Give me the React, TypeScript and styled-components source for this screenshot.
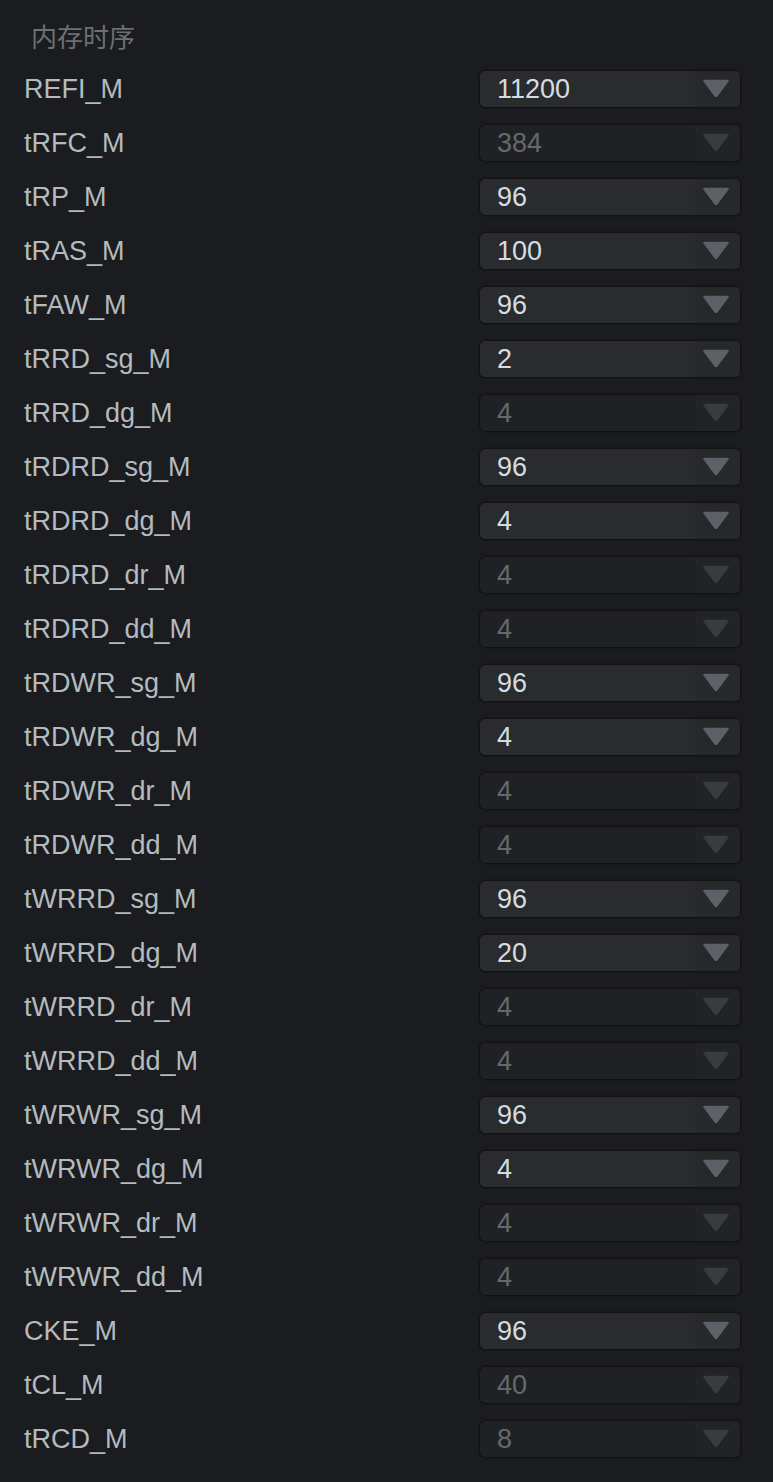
import React from "react";
import styled, { createGlobalStyle } from "styled-components";

const Global = createGlobalStyle`
  html, body { margin: 0; padding: 0; background: #1b1c1f; }
  body { font-family: "Liberation Sans", Arial, "Noto Sans CJK SC", sans-serif; }
`;

const Page = styled.div`
  width: 773px;
  height: 1482px;
  background: #1b1c1f;
  box-sizing: border-box;
  padding: 0 33px 0 24px;
  overflow: hidden;
`;

const Title = styled.div`
  height: 62px;
  display: flex;
  align-items: center;
  padding-left: 7px;
  padding-top: 8px;
  box-sizing: border-box;
  font-family: "Noto Sans CJK SC", sans-serif;
  font-size: 26px;
  color: #6c6f73;
`;

const List = styled.div`
  display: flex;
  flex-direction: column;
`;

const Row = styled.div`
  height: 54px;
  display: flex;
  align-items: center;
  justify-content: space-between;
`;

const Label = styled.div`
  font-size: 27px;
  color: #b3bbbf;
  padding-top: 1px;
`;

const Select = styled.div<{ $disabled?: boolean }>`
  width: 260px;
  height: 36px;
  border-radius: 5px;
  display: flex;
  overflow: hidden;
  background: ${(p) => (p.$disabled ? "#1f2124" : "#2a2b2d")};
  box-shadow: 0 0 2px 1px rgba(0, 0, 0, 0.45);
`;

const Value = styled.div<{ $disabled?: boolean }>`
  flex: 1;
  display: flex;
  align-items: center;
  padding-left: 17px;
  padding-top: 1px;
  font-size: 27px;
  color: ${(p) => (p.$disabled ? "#66696c" : "#d3dde1")};
`;

const Arrow = styled.div<{ $disabled?: boolean }>`
  width: 45px;
  display: flex;
  align-items: center;
  justify-content: center;
  box-sizing: border-box;
  padding-right: 3px;
  padding-bottom: 1px;
  background: ${(p) => (p.$disabled ? "#212326" : "#27282a")};
  svg { display: block; }
`;

type Item = [string, string, boolean];

const items: Item[] = [
  ["REFI_M", "11200", false],
  ["tRFC_M", "384", true],
  ["tRP_M", "96", false],
  ["tRAS_M", "100", false],
  ["tFAW_M", "96", false],
  ["tRRD_sg_M", "2", false],
  ["tRRD_dg_M", "4", true],
  ["tRDRD_sg_M", "96", false],
  ["tRDRD_dg_M", "4", false],
  ["tRDRD_dr_M", "4", true],
  ["tRDRD_dd_M", "4", true],
  ["tRDWR_sg_M", "96", false],
  ["tRDWR_dg_M", "4", false],
  ["tRDWR_dr_M", "4", true],
  ["tRDWR_dd_M", "4", true],
  ["tWRRD_sg_M", "96", false],
  ["tWRRD_dg_M", "20", false],
  ["tWRRD_dr_M", "4", true],
  ["tWRRD_dd_M", "4", true],
  ["tWRWR_sg_M", "96", false],
  ["tWRWR_dg_M", "4", false],
  ["tWRWR_dr_M", "4", true],
  ["tWRWR_dd_M", "4", true],
  ["CKE_M", "96", false],
  ["tCL_M", "40", true],
  ["tRCD_M", "8", true],
];

const Triangle = ({ disabled }: { disabled: boolean }) => (
  <svg width="28" height="19" viewBox="0 0 28 19">
    <path
      d="M2.6 0.8 H25.4 Q27.6 0.8 26.4 2.8 L15.4 17.4 Q14 19 12.6 17.4 L1.6 2.8 Q0.4 0.8 2.6 0.8 Z"
      fill={disabled ? "#383c3f" : "#5b6167"}
    />
  </svg>
);

export default function App() {
  return (
    <Page>
      <Global />
      <Title>内存时序</Title>
      <List>
        {items.map(([label, value, disabled]) => (
          <Row key={label}>
            <Label>{label}</Label>
            <Select $disabled={disabled}>
              <Value $disabled={disabled}>{value}</Value>
              <Arrow $disabled={disabled}>
                <Triangle disabled={disabled} />
              </Arrow>
            </Select>
          </Row>
        ))}
      </List>
    </Page>
  );
}
